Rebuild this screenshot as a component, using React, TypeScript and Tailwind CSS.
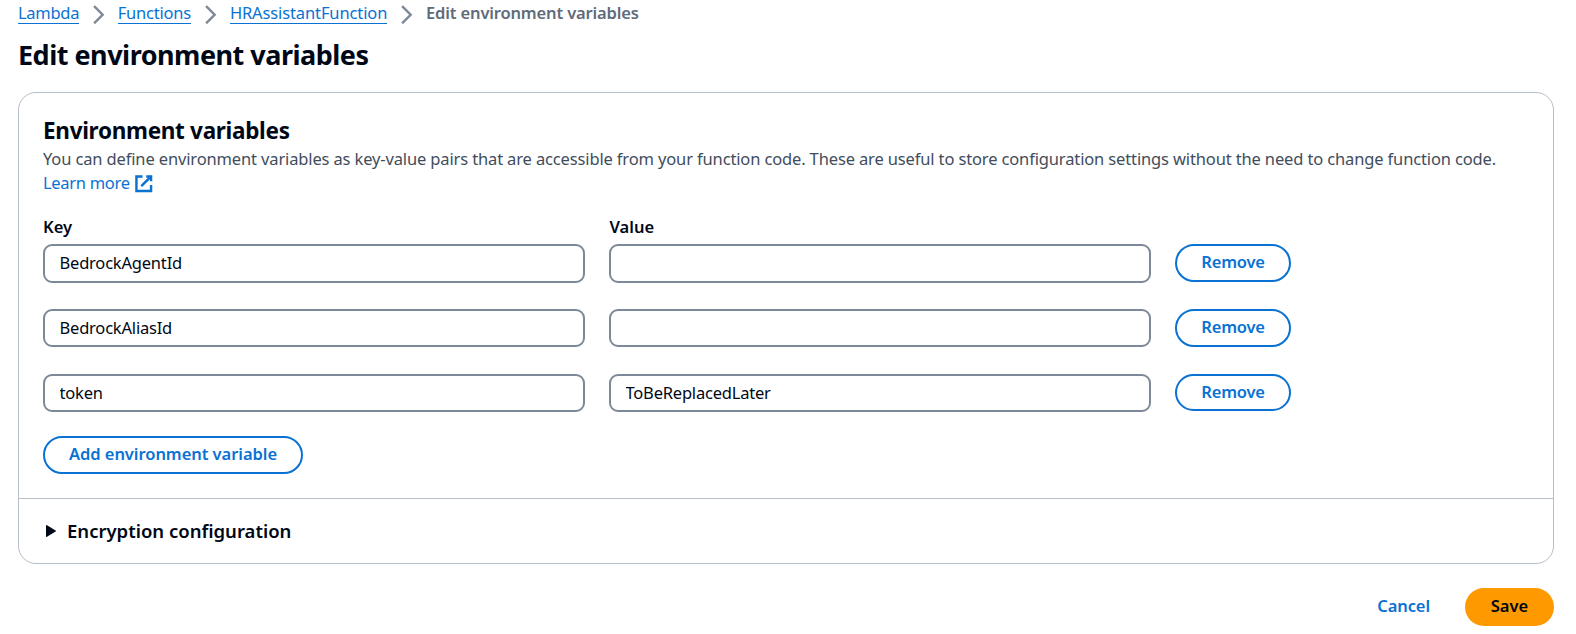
import type { ReactNode } from "react";

const variables = [
  { key: "BedrockAgentId", value: "", inputHeight: "h-[39px] pb-[3px]", buttonHeight: "h-[38px] pb-[3px]" },
  { key: "BedrockAliasId", value: "", inputHeight: "h-[38px] pb-[2px]", buttonHeight: "h-[38px] pb-[3px]" },
  { key: "token", value: "ToBeReplacedLater", inputHeight: "h-[38px] pb-[2px]", buttonHeight: "h-[37px] pb-px" },
];

function Chevron() {
  return (
    <svg viewBox="0 0 16 16" fill="none" className="ml-[8.5px] mr-[10.7px] mt-[4.5px] size-[19.5px] shrink-0 stroke-[#7d8998] stroke-2">
      <path d="m5 1 7 7-7 7" />
    </svg>
  );
}

function Crumb({ children, className }: { children: ReactNode; className: string }) {
  return (
    <a href="#" className={`h-6 shrink-0 whitespace-nowrap border-b border-[#0972d3] pt-px text-[#0972d3] ${className}`}>
      {children}
    </a>
  );
}

function Field({ value, height }: { value: string; height: string }) {
  return (
    <input
      readOnly
      value={value}
      className={`w-[542px] shrink-0 rounded-[9px] border-2 border-[#7d8998] bg-white px-[14.5px] tracking-[-0.2px] text-[#000716] outline-none ${height}`}
    />
  );
}

function PillButton({ children, className }: { children: ReactNode; className: string }) {
  return (
    <button
      className={`flex shrink-0 items-center justify-center whitespace-nowrap rounded-full border-2 border-[#0972d3] font-semibold text-[#0972d3] ${className}`}
    >
      {children}
    </button>
  );
}

export default function App() {
  return (
    <div className="flex h-[634px] w-[1576px] flex-col overflow-hidden bg-white pl-[18px] pr-[22px] font-['Noto_Sans',sans-serif] text-[16.5px] leading-6 text-[#000716]">
      <nav className="flex h-[37px] items-start">
        <Crumb className="w-[61px] tracking-[-0.3px]">Lambda</Crumb>
        <Chevron />
        <Crumb className="w-[73.5px] tracking-[-0.2px]">Functions</Crumb>
        <Chevron />
        <Crumb className="w-[157.5px] tracking-[-0.12px]">HRAssistantFunction</Crumb>
        <Chevron />
        <span className="whitespace-nowrap pt-px font-semibold tracking-[-0.15px] text-[#5f6b7a]">
          Edit environment variables
        </span>
      </nav>

      <h1 className="h-[55px] text-[27px] font-bold leading-9 tracking-[-0.5px]">Edit environment variables</h1>

      <section className="flex h-[472px] w-[1536px] flex-col rounded-[18px] border border-[#b6bec9]">
        <div className="flex h-[405px] flex-col px-6 pt-6">
          <h2 className="text-[22.5px] font-bold leading-7 tracking-[-0.3px]">Environment variables</h2>
          <p className="mt-[2px] whitespace-nowrap tracking-[-0.14px] text-[#414d5c]">
            You can define environment variables as key-value pairs that are accessible from your function code. These
            are useful to store configuration settings without the need to change function code.
          </p>
          <a href="#" className="flex items-start text-[#0972d3]">
            <span className="w-[91px] tracking-[-0.3px]">Learn more</span>
            <svg viewBox="0 0 16 16" fill="none" className="mt-[3px] size-[19.5px] stroke-[#0972d3] stroke-2">
              <path d="M10 2h4v4" />
              <path d="m6 10 8-8" />
              <path d="M14 9.048V14H2V2h5" />
            </svg>
          </a>

          <div className="mt-5 flex h-[29px] gap-6 font-semibold">
            <span className="w-[542px]">Key</span>
            <span className="pl-[0.5px]">Value</span>
          </div>

          <div className="flex flex-col">
            {variables.map((v) => (
              <div key={v.key} className="flex h-[65px] items-start gap-6">
                <Field value={v.key} height={v.inputHeight} />
                <Field value={v.value} height={v.inputHeight} />
                <PillButton className={`w-[116px] tracking-[-0.2px] ${v.buttonHeight}`}>Remove</PillButton>
              </div>
            ))}
          </div>

          <PillButton className="-mt-[3px] h-[38px] w-[260px] pb-[3px] tracking-[-0.05px]">
            Add environment variable
          </PillButton>
        </div>

        <div className="flex flex-1 items-center border-t border-[#b6bec9] pl-[27px] text-[18.5px] font-semibold">
          <svg viewBox="0 0 10 12" className="mr-[11px] h-3 w-[10px] fill-[#000716]">
            <path d="M0 .6C0 .1.5-.1 1 .2L9.6 5.5c.5.3.5.7 0 1L1 11.8c-.5.3-1 .1-1-.4z" />
          </svg>
          Encryption configuration
        </div>
      </section>

      <div className="mt-6 flex h-[38px] items-center justify-end font-semibold">
        <button className="mr-[35px] pb-[3px] tracking-[-0.1px] text-[#0972d3]">Cancel</button>
        <button className="h-[38px] w-[89px] rounded-full bg-[#ff9900] pb-[3px]">Save</button>
      </div>
    </div>
  );
}
